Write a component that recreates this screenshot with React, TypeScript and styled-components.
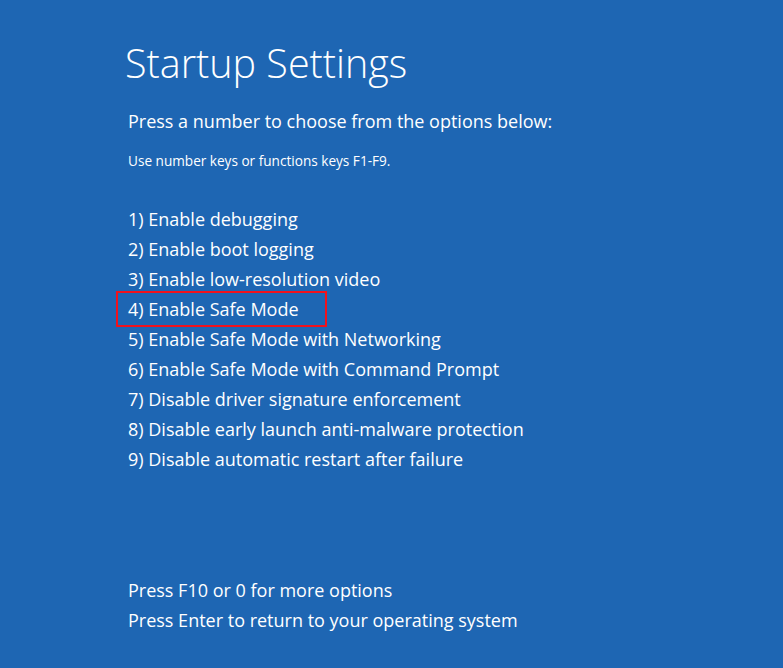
import styled, { createGlobalStyle } from "styled-components";

const GlobalStyle = createGlobalStyle`
  html, body {
    margin: 0;
    padding: 0;
    background: #1e66b3;
  }
`;

const Screen = styled.div`
  width: 783px;
  height: 668px;
  box-sizing: border-box;
  padding: 33px 0 0 128px;
  background: #1e66b3;
  color: #ffffff;
  font-family: "Open Sans", "Noto Sans", sans-serif;
  overflow: hidden;
`;

const Title = styled.h1`
  margin: 0 0 0 -3px;
  font-size: 39.5px;
  font-weight: 300;
  line-height: 60px;
`;

const Lead = styled.p`
  margin: 13px 0 0 0;
  font-size: 18px;
  line-height: 30px;
`;

const Hint = styled.p`
  margin: 15px 0 0 0;
  font-size: 13.6px;
  line-height: 20px;
`;

const Options = styled.ol`
  list-style: none;
  margin: 33px 0 0 0;
  padding: 0;
`;

const Option = styled.li<{ $selected?: boolean }>`
  font-size: 18px;
  line-height: 30px;
  ${(p) =>
    p.$selected &&
    `
    width: 196px;
    margin-left: -9px;
    padding-left: 9px;
    outline: 2px solid #f2121c;
    outline-offset: 1px;
  `}
`;

const Footer = styled.div`
  margin-top: 101px;
`;

const FooterLine = styled.p`
  margin: 0;
  font-size: 18px;
  line-height: 30px;
`;

const options = [
  "Enable debugging",
  "Enable boot logging",
  "Enable low-resolution video",
  "Enable Safe Mode",
  "Enable Safe Mode with Networking",
  "Enable Safe Mode with Command Prompt",
  "Disable driver signature enforcement",
  "Disable early launch anti-malware protection",
  "Disable automatic restart after failure",
];

export default function App() {
  return (
    <>
      <GlobalStyle />
      <Screen>
        <Title>Startup Settings</Title>
        <Lead>Press a number to choose from the options below:</Lead>
        <Hint>Use number keys or functions keys F1-F9.</Hint>
        <Options>
          {options.map((label, i) => (
            <Option key={label} $selected={i === 3}>
              {i + 1}) {label}
            </Option>
          ))}
        </Options>
        <Footer>
          <FooterLine>Press F10 or 0 for more options</FooterLine>
          <FooterLine>Press Enter to return to your operating system</FooterLine>
        </Footer>
      </Screen>
    </>
  );
}
